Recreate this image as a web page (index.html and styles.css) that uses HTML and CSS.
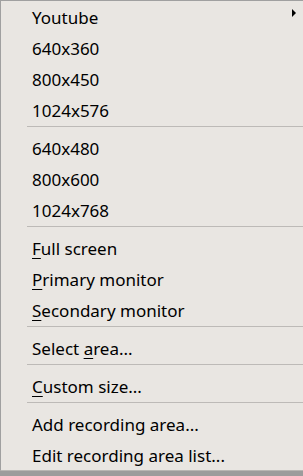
FILE: index.html
```html
<!DOCTYPE html>
<html lang="en">
<head>
  <meta charset="UTF-8">
  <title>Recording area</title>
  <link rel="stylesheet" href="styles.css">
</head>
<body>
  <div class="menu">
    <div class="menu-item has-sub">Youtube<span class="sub-arrow"></span></div>
    <div class="menu-item">640x360</div>
    <div class="menu-item">800x450</div>
    <div class="menu-item">1024x576</div>
    <div class="menu-sep"></div>
    <div class="menu-item">640x480</div>
    <div class="menu-item">800x600</div>
    <div class="menu-item">1024x768</div>
    <div class="menu-sep"></div>
    <div class="menu-item"><u>F</u>ull screen</div>
    <div class="menu-item"><u>P</u>rimary monitor</div>
    <div class="menu-item"><u>S</u>econdary monitor</div>
    <div class="menu-sep"></div>
    <div class="menu-item">Select <u>a</u>rea...</div>
    <div class="menu-sep"></div>
    <div class="menu-item"><u>C</u>ustom size...</div>
    <div class="menu-sep"></div>
    <div class="menu-item">Add recording area...</div>
    <div class="menu-item">Edit recording area list...</div>
  </div>
</body>
</html>
```

FILE: styles.css
```css
body {
  margin: 0;
  background: #9c9c9c;
  font-family: "Noto Sans", "Open Sans", sans-serif;
  color: #000;
}

.menu {
  width: 303px;
  height: 471px;
  box-sizing: border-box;
  background: #e9e6e2;
  border-top: 1px solid #a0a0a0;
  border-left: 1px solid #a0a0a0;
  border-bottom: 1px solid #b8b6b3;
  box-shadow: 0 3px 0 #8e8e8e;
}

.menu-item {
  position: relative;
  box-sizing: border-box;
  height: 31px;
  padding-top: 3px;
  line-height: 28px;
  padding-left: 31px;
  font-size: 17px;
  white-space: nowrap;
}

.menu-item u {
  text-underline-offset: 3px;
  text-decoration-thickness: 1px;
}

.sub-arrow {
  position: absolute;
  top: 8px;
  left: 291px;
  width: 0;
  height: 0;
  border-top: 4px solid transparent;
  border-bottom: 4px solid transparent;
  border-left: 4px solid #000;
}

.menu-sep {
  height: 1px;
  margin: 1px 0 5px 26px;
  background: #bdbab7;
}
```
